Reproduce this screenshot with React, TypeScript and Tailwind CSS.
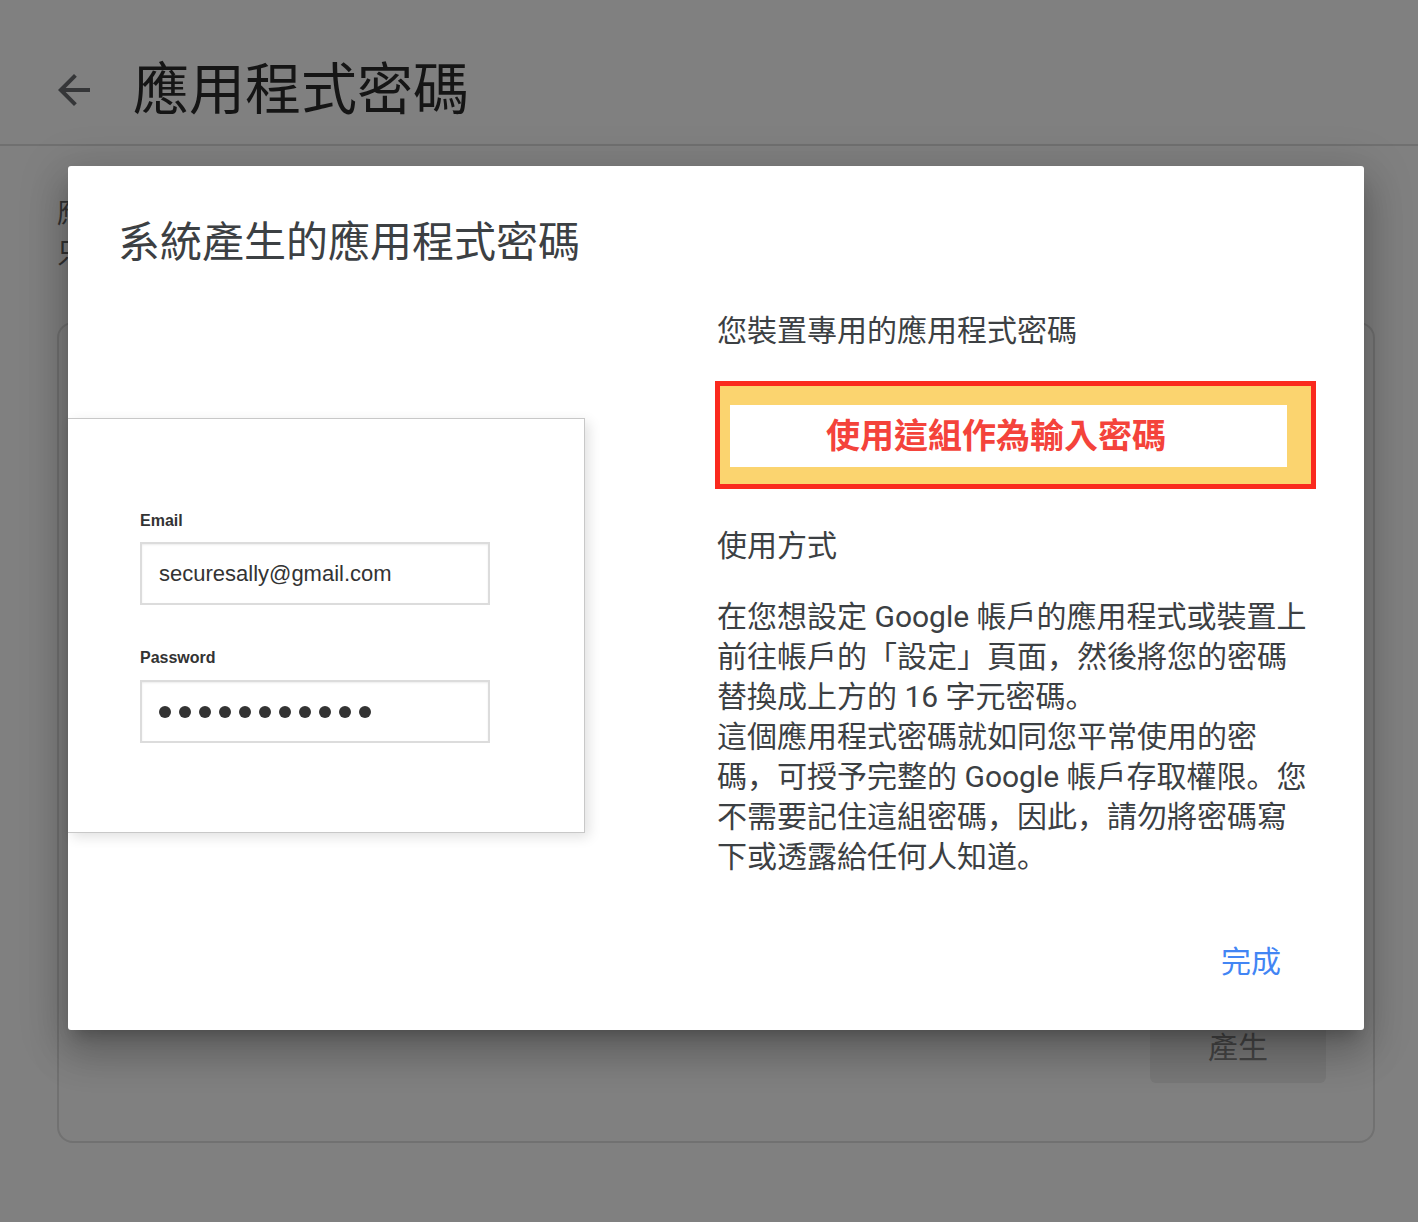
import React from "react";

const CJK = { fontFamily: 'Roboto, "Noto Sans CJK TC", "Noto Sans CJK SC", sans-serif' };
const CJKSC = { fontFamily: 'Roboto, "Noto Sans CJK SC", "Noto Sans CJK TC", sans-serif' };
const ARIAL = { fontFamily: '"Liberation Sans", Arial, sans-serif' };

export default function App() {
  const paraLines = [
    "在您想設定 Google 帳戶的應用程式或裝置上",
    "前往帳戶的「設定」頁面，然後將您的密碼",
    "替換成上方的 16 字元密碼。",
    "這個應用程式密碼就如同您平常使用的密",
    "碼，可授予完整的 Google 帳戶存取權限。您",
    "不需要記住這組密碼，因此，請勿將密碼寫",
    "下或透露給任何人知道。",
  ];
  return (
    <div className="relative w-[1418px] h-[1222px] overflow-hidden bg-[#808080]" style={CJK}>
      {/* header */}
      <div className="flex h-[146px] items-center border-b-2 border-[#707070] pl-[50px] pt-[36px]">
        <svg width="48" height="48" viewBox="0 0 24 24">
          <path d="M20 11H7.83l5.59-5.59L12 4l-8 8 8 8 1.41-1.41L7.83 13H20v-2z" fill="#353638" />
        </svg>
        <div className="ml-[35px] text-[56px] leading-[56px] text-[#151515]">應用程式密碼</div>
      </div>

      {/* background content (mostly covered by the dialog) */}
      <div className="pl-[57px] pr-[43px]">
        <div className="mt-[48px] w-[56px] overflow-hidden text-[28px] leading-[40px] text-[#323232] whitespace-nowrap">
          <div>應用</div>
          <div>只需</div>
        </div>
        <div className="mt-[48px] flex h-[821px] flex-col items-end justify-end rounded-[16px] border-2 border-[#717171] pb-[58px] pr-[47px]">
          <div className="flex h-[72px] w-[176px] items-end justify-center rounded-[6px] bg-[#787878] pb-[20px] text-[30px] leading-[30px] text-[#454545]">
            產生
          </div>
        </div>
      </div>

      {/* dialog */}
      <div className="absolute left-[68px] top-[166px] w-[1296px] h-[864px] rounded-[3px] bg-white shadow-[0_24px_38px_3px_rgba(0,0,0,0.16),0_9px_46px_8px_rgba(0,0,0,0.14),0_11px_15px_-7px_rgba(0,0,0,0.22)]">
        <div className="pl-[50px] pt-[56px] text-[42px] leading-[42px] text-[#3c4043]">系統產生的應用程式密碼</div>
        <div className="flex">
          {/* left illustration */}
          <div className="w-[649px] shrink-0">
            <div className="mt-[154px] h-[415px] w-[517px] border border-l-0 border-[#c8c8c8] bg-white shadow-[4px_4px_12px_rgba(0,0,0,0.12)]" style={ARIAL}>
              <div className="pl-[72px] pt-[91px]">
                <div className="text-[16px] leading-[22px] font-bold text-[#333]">Email</div>
                <div className="mt-[10px] flex h-[63px] w-[350px] items-center border-2 border-[#dcdcdc] pl-[17px] text-[22px] text-[#333] shadow-[inset_0_1px_2px_rgba(0,0,0,0.08)]">
                  securesally@gmail.com
                </div>
                <div className="mt-[42px] text-[16px] leading-[22px] font-bold text-[#333]">Password</div>
                <div className="mt-[11px] flex h-[63px] w-[350px] items-center gap-[8px] border-2 border-[#dcdcdc] pl-[17px] shadow-[inset_0_1px_2px_rgba(0,0,0,0.08)]">
                  {Array.from({ length: 11 }).map((_, i) => (
                    <span key={i} className="h-[12px] w-[12px] rounded-full bg-[#333]" />
                  ))}
                </div>
              </div>
            </div>
          </div>

          {/* right column */}
          <div className="w-[647px] text-[#3c4043]">
            <div className="mt-[52px] text-[30px] leading-[30px]">您裝置專用的應用程式密碼</div>
            <div className="ml-[-2px] mt-[35px] h-[108px] w-[601px] border-[5px] border-[#fa2a1e] bg-[#fbd46f] pl-[10px] pr-[24px] pt-[19px]">
              <div className="flex h-[62px] items-center bg-white pl-[96px] text-[34px] font-bold leading-[34px] text-[#f4433b]">
                使用這組作為輸入密碼
              </div>
            </div>
            <div className="mt-[42px] text-[30px] leading-[30px]">使用方式</div>
            <div className="mt-[36px] text-[30px] leading-[40px] whitespace-nowrap" style={CJKSC}>
              {paraLines.map((l, i) => (
                <div key={i}>{l}</div>
              ))}
            </div>
            <div className="mt-[70px] flex justify-end pr-[83px]">
              <span className="text-[30px] leading-[30px] text-[#4285f4]">完成</span>
            </div>
          </div>
        </div>
      </div>
    </div>
  );
}
